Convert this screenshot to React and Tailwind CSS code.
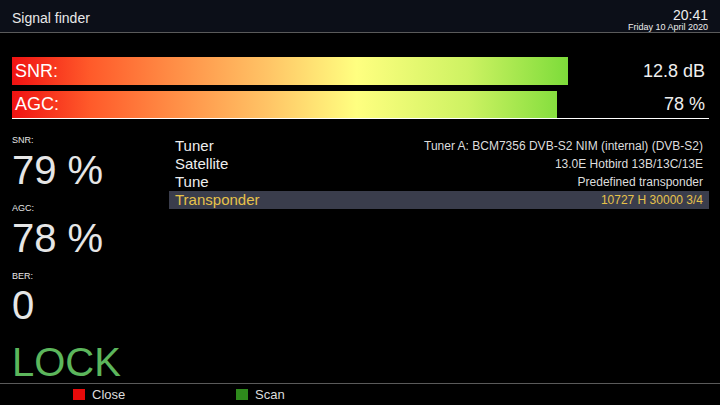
import React from "react";

const bars = [
  { label: "SNR:", value: "12.8 dB", width: 556, height: "h-[28px]" },
  { label: "AGC:", value: "78 %", width: 545, height: "h-[27px]" },
];

const rows = [
  { name: "Tuner", value: "Tuner A: BCM7356 DVB-S2 NIM (internal) (DVB-S2)" },
  { name: "Satellite", value: "13.0E Hotbird 13B/13C/13E" },
  { name: "Tune", value: "Predefined transponder" },
  { name: "Transponder", value: "10727 H 30000 3/4", active: true },
];

const App = () => {
  return (
    <div className="w-[720px] h-[405px] bg-black flex flex-col overflow-hidden font-['Liberation_Sans',Arial,sans-serif] text-[#eeeeee]">
      {/* header */}
      <div className="h-[33px] shrink-0 bg-[#0c0f18] border-b border-[#5a5a5a] flex justify-between items-start px-[12px]">
        <div className="pt-[11px] text-[14px] leading-[14px] text-[#e8e8e8]">Signal finder</div>
        <div className="pt-[9px] flex flex-col items-end">
          <div className="text-[14px] leading-[13px]">20:41</div>
          <div className="text-[9px] leading-[10px]">Friday 10 April 2020</div>
        </div>
      </div>

      {/* bars */}
      <div className="pt-[24px] px-[12px] shrink-0">
        {bars.map((b, i) => (
          <div key={b.label} className={"flex items-center " + b.height + (i > 0 ? " mt-[6px]" : "")}>
            <div
              className="h-full flex items-center pl-[3px] text-[18px] text-white bg-[linear-gradient(90deg,#f01212_0%,#ff5a2a_14%,#ff8a44_28%,#ffc466_46%,#ffff80_62%,#cdf262_82%,#7ddc3a_100%)] bg-[length:556px_100%] bg-no-repeat"
              style={{ width: b.width }}
            >
              {b.label}
            </div>
            <div className="ml-auto pr-[3px] text-[18px] text-[#eeeeee]">{b.value}</div>
          </div>
        ))}
        <div className="h-px w-[697px] bg-white" />
      </div>

      {/* main */}
      <div className="flex flex-1 min-h-0">
        <div className="w-[169px] shrink-0 pl-[12px] flex flex-col text-[#e6e6e6]">
          <div className="mt-[16px] text-[9px] leading-[11px]">SNR:</div>
          <div className="mt-[4px] text-[40px] leading-[40px]">79 %</div>
          <div className="mt-[13px] text-[9px] leading-[11px]">AGC:</div>
          <div className="mt-[4px] text-[40px] leading-[40px]">78 %</div>
          <div className="mt-[13px] text-[9px] leading-[11px]">BER:</div>
          <div className="mt-[3px] text-[40px] leading-[40px]">0</div>
          <div className="mt-[17px] text-[40px] leading-[40px] text-[#5cb65c]">LOCK</div>
        </div>

        <div className="w-[540px] mt-[18px] self-start">
          {rows.map((r) => (
            <div
              key={r.name}
              className={
                "h-[18px] flex items-center justify-between px-[6px] " +
                (r.active ? "bg-[#3a3d4c] text-[#e6c24a]" : "")
              }
            >
              <span className="text-[15px]">{r.name}</span>
              <span className={"text-[12px] " + (r.active ? "" : "text-[#dddddd]")}>{r.value}</span>
            </div>
          ))}
        </div>
      </div>

      {/* footer */}
      <div className="h-[22px] shrink-0 border-t border-[#5a5a5a] flex items-center pl-[73px] text-[13px] text-[#dddddd]">
        <div className="w-[163px] flex items-center gap-[7px]">
          <span className="w-[12px] h-[11px] bg-[#e80a0a]" />
          <span>Close</span>
        </div>
        <div className="flex items-center gap-[7px]">
          <span className="w-[12px] h-[11px] bg-[#2e8a1c]" />
          <span>Scan</span>
        </div>
      </div>
    </div>
  );
};

export default App;
